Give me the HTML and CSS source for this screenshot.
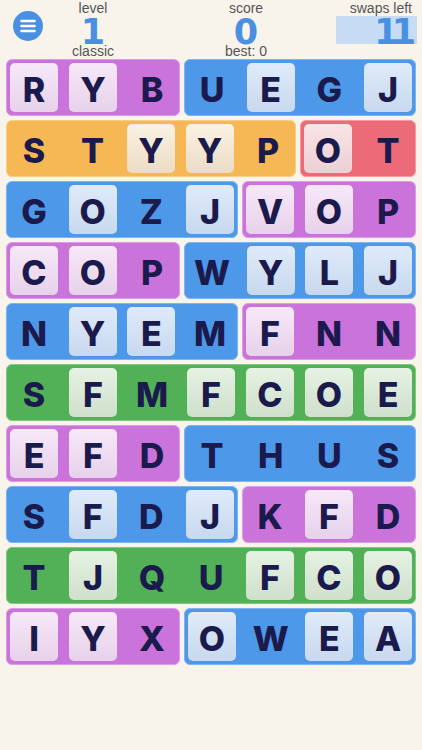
FILE: index.html
```html
<!DOCTYPE html>
<html lang="en">
<head>
    <meta charset="UTF-8">
    <meta name="viewport" content="width=device-width, initial-scale=1.0">
    <title>Word Swap</title>
    <link rel="stylesheet" href="styles.css">
</head>
<body>
    <div class="header">
        <div class="menu-btn">
            <svg width="30" height="30" viewBox="0 0 30 30">
                <circle cx="15" cy="15" r="15" fill="#4a90e2"/>
                <g stroke="#fff" stroke-width="2.6" stroke-linecap="round">
                    <line x1="8.5" y1="10" x2="21.5" y2="10"/>
                    <line x1="8.5" y1="15" x2="21.5" y2="15"/>
                    <line x1="8.5" y1="20" x2="21.5" y2="20"/>
                </g>
            </svg>
        </div>
        <div class="stat level">
            <div class="stat-label">level</div>
            <div class="stat-value">1</div>
            <div class="stat-sub">classic</div>
        </div>
        <div class="stat score">
            <div class="stat-label">score</div>
            <div class="stat-value">0</div>
            <div class="stat-sub">best: 0</div>
        </div>
        <div class="swaps">
            <div class="stat-label">swaps left</div>
            <div class="swaps-box">11</div>
        </div>
    </div>

    <div class="board">
        <div class="row">
            <div class="group purple span3">
                <span class="tile lit">R</span><span class="tile lit">Y</span><span class="tile">B</span>
            </div>
            <div class="group blue span4">
                <span class="tile">U</span><span class="tile lit">E</span><span class="tile">G</span><span class="tile lit">J</span>
            </div>
        </div>
        <div class="row">
            <div class="group orange span5">
                <span class="tile">S</span><span class="tile">T</span><span class="tile lit">Y</span><span class="tile lit">Y</span><span class="tile">P</span>
            </div>
            <div class="group red span2">
                <span class="tile lit">O</span><span class="tile">T</span>
            </div>
        </div>
        <div class="row">
            <div class="group blue span4">
                <span class="tile">G</span><span class="tile lit">O</span><span class="tile">Z</span><span class="tile lit">J</span>
            </div>
            <div class="group purple span3">
                <span class="tile lit">V</span><span class="tile lit">O</span><span class="tile">P</span>
            </div>
        </div>
        <div class="row">
            <div class="group purple span3">
                <span class="tile lit">C</span><span class="tile lit">O</span><span class="tile">P</span>
            </div>
            <div class="group blue span4">
                <span class="tile">W</span><span class="tile lit">Y</span><span class="tile lit">L</span><span class="tile lit">J</span>
            </div>
        </div>
        <div class="row">
            <div class="group blue span4">
                <span class="tile">N</span><span class="tile lit">Y</span><span class="tile lit">E</span><span class="tile">M</span>
            </div>
            <div class="group purple span3">
                <span class="tile lit">F</span><span class="tile">N</span><span class="tile">N</span>
            </div>
        </div>
        <div class="row">
            <div class="group green span7">
                <span class="tile">S</span><span class="tile lit">F</span><span class="tile">M</span><span class="tile lit">F</span><span class="tile lit">C</span><span class="tile lit">O</span><span class="tile lit">E</span>
            </div>
        </div>
        <div class="row">
            <div class="group purple span3">
                <span class="tile lit">E</span><span class="tile lit">F</span><span class="tile">D</span>
            </div>
            <div class="group blue span4">
                <span class="tile">T</span><span class="tile">H</span><span class="tile">U</span><span class="tile">S</span>
            </div>
        </div>
        <div class="row">
            <div class="group blue span4">
                <span class="tile">S</span><span class="tile lit">F</span><span class="tile">D</span><span class="tile lit">J</span>
            </div>
            <div class="group purple span3">
                <span class="tile">K</span><span class="tile lit">F</span><span class="tile">D</span>
            </div>
        </div>
        <div class="row">
            <div class="group green span7">
                <span class="tile">T</span><span class="tile lit">J</span><span class="tile">Q</span><span class="tile">U</span><span class="tile lit">F</span><span class="tile lit">C</span><span class="tile lit">O</span>
            </div>
        </div>
        <div class="row">
            <div class="group purple span3">
                <span class="tile lit">I</span><span class="tile lit">Y</span><span class="tile">X</span>
            </div>
            <div class="group blue span4">
                <span class="tile lit">O</span><span class="tile">W</span><span class="tile lit">E</span><span class="tile lit">A</span>
            </div>
        </div>
    </div>
</body>
</html>
```

FILE: styles.css
```css
body {
    margin: 0;
    background-color: #f8f4eb;
    font-family: "Liberation Sans", Arial, sans-serif;
}
.header {
    display: flex;
    height: 56px;
    padding-top: 1px;
    margin-bottom: 2px;
}
.menu-btn {
    width: 30px;
    height: 30px;
    margin: 10px 0 0 13px;
}
.stat {
    width: 100px;
    text-align: center;
}
.score {
    margin-left: 53px;
}
.stat-label,
.stat-sub {
    font-size: 14px;
    line-height: 14px;
    color: #555;
}
.stat-value {
    height: 29px;
    font-family: "DejaVu Sans", sans-serif;
    font-size: 35px;
    font-weight: bold;
    line-height: 34px;
    color: #4a90e2;
}
.swaps {
    margin-left: auto;
    margin-right: 5px;
    text-align: right;
}
.swaps .stat-label {
    padding-right: 5px;
}
.swaps-box {
    width: 81px;
    height: 28px;
    margin-top: 1px;
    padding-right: 8px;
    box-sizing: border-box;
    background-color: #c6dcf5;
    font-family: "DejaVu Sans", sans-serif;
    font-size: 35px;
    font-weight: bold;
    line-height: 32px;
    color: #4a90e2;
    letter-spacing: -7px;
}
.board {
    padding: 0 6px;
}
.row {
    display: flex;
    gap: 4px;
    margin-bottom: 4px;
}
.group {
    display: flex;
    flex-shrink: 0;
    justify-content: space-between;
    align-items: center;
    height: 57px;
    padding: 0 3px;
    box-sizing: border-box;
    border: 1px solid;
    border-radius: 6px;
}
.span2 { width: calc((100% - 4px) * 2 / 7); }
.span3 { width: calc((100% - 4px) * 3 / 7); }
.span4 { width: calc((100% - 4px) * 4 / 7); }
.span5 { width: calc((100% - 4px) * 5 / 7); }
.span7 { width: 100%; }
.tile {
    display: flex;
    justify-content: center;
    align-items: center;
    width: 48px;
    height: 49px;
    padding-top: 3px;
    box-sizing: border-box;
    border-radius: 5px;
    font-family: Inter, Lato, sans-serif;
    font-weight: 800;
    font-size: 34px;
    color: #1b1a4c;
}
.purple {
    background-color: #c973db;
    border-color: #dc9de8;
}
.purple .lit {
    background: linear-gradient(#f7e8f9, #e6d2ea);
}
.blue {
    background-color: #4d98e8;
    border-color: #7fb5ef;
}
.blue .lit {
    background: linear-gradient(#dfebfa, #c8d8ee);
}
.orange {
    background-color: #f5b854;
    border-color: #f8cf86;
}
.orange .lit {
    background: linear-gradient(#fbf2e3, #ebdcc5);
}
.red {
    background-color: #ed6a78;
    border-color: #f39aa4;
}
.red .lit {
    background: linear-gradient(#fae3e6, #ecd0d4);
}
.green {
    background-color: #52b156;
    border-color: #82c985;
}
.green .lit {
    background: linear-gradient(#e6f2e3, #cfe0cc);
}
```
